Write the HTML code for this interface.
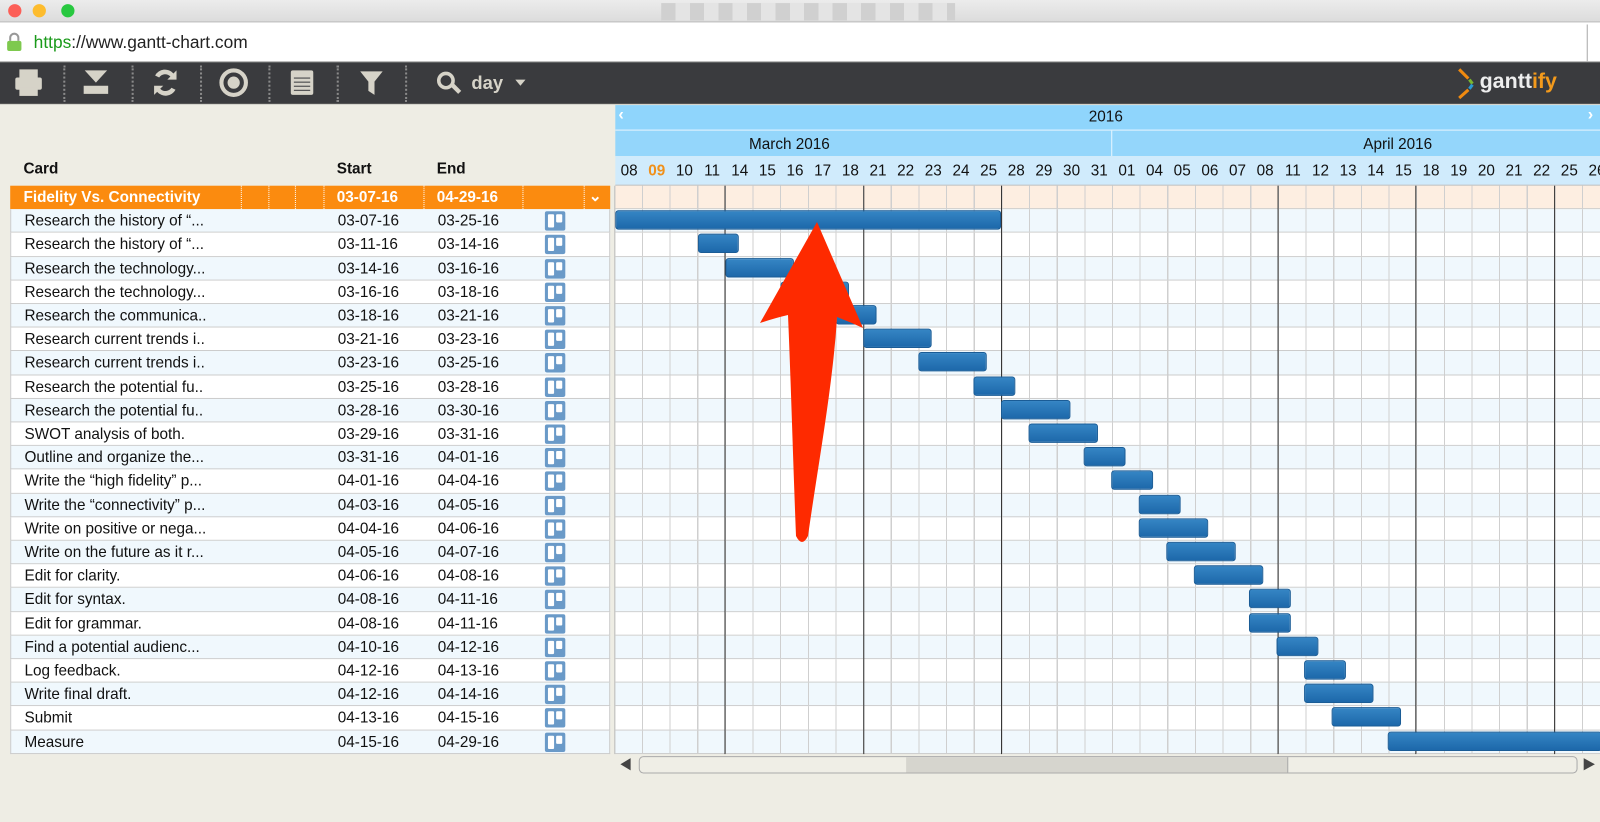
<!DOCTYPE html>
<html><head><meta charset="utf-8"><style>
*{box-sizing:border-box;margin:0;padding:0}
body{width:1600px;height:822px;overflow:hidden;background:#eeede4;font-family:"Liberation Sans",sans-serif;position:relative}
#w{position:absolute;left:0;top:0;width:1568px;height:806px;transform:scale(1.020408);transform-origin:0 0}
.a{position:absolute}
.title{left:0;top:0;width:1568px;height:22px;background:linear-gradient(#ececec,#dcdcdc);border-bottom:1px solid #b8b8b8}
.dot{top:4px;width:13px;height:13px;border-radius:50%}
.addr{left:0;top:22px;width:1568px;height:39px;background:#fff;border-bottom:1px solid #aaa}
.tb{left:0;top:61px;width:1568px;height:41px;background:#3a3b3e;border-bottom:1px solid #555}
.sep{top:64px;height:36px;border-left:2px dotted #8a8a8a}
.hdr{font-weight:bold;font-size:15px;color:#111;top:157px}
.row{left:10px;width:588px;height:23.2px;font-size:15px;color:#111;border-bottom:1px solid #ccc;border-left:1px solid #ccc;border-right:1px solid #ccc}
.row span{position:absolute;top:3px}
.ic{position:absolute;left:523px;top:2px;width:20px;height:19px;background:#6a9ac8;border-radius:2px}
.ic:before{content:"";position:absolute;left:3px;top:3px;width:6px;height:13px;background:#fff;border-radius:1px}
.ic:after{content:"";position:absolute;left:11px;top:3px;width:6px;height:8px;background:#fff;border-radius:1px}
.bar{position:absolute;height:19px;border-radius:3px;background:linear-gradient(#3585c4,#1d68aa);border:1px solid #1a5c96}
.gr{left:603px;width:965px;height:23.2px;border-bottom:1px solid #ccc;background-image:repeating-linear-gradient(90deg,transparent 0,transparent 26px,#cfcfcf 26px,#cfcfcf 27.1px)}
.vl{top:182px;width:1px;height:557px;background:#333}
.d{position:absolute;top:159px;font-size:15px;color:#111;width:27.1px;text-align:center}
</style></head><body>
<div id="w">
<div class="a title"></div>
<div class="a dot" style="left:8px;background:#fc5f57"></div>
<div class="a dot" style="left:32px;background:#fdbc2e"></div>
<div class="a dot" style="left:60px;background:#28c840"></div>
<div class="a" style="left:648px;top:3px;width:288px;height:17px;background:repeating-linear-gradient(90deg,#d0d0d0 0,#d0d0d0 14px,#e4e4e4 14px,#e4e4e4 28px)"></div>
<div class="a addr"></div>
<svg class="a" style="left:6px;top:31px" width="16" height="20"><path d="M4 9V6a4 4 0 0 1 8 0v3" fill="none" stroke="#999" stroke-width="2"/><rect x="1" y="9" width="14" height="10" rx="2" fill="#7ec94e"/></svg>
<div class="a" style="left:33px;top:32px;font-size:17px;color:#222"><span style="color:#1a9a1a">https</span>://www.gantt-chart.com</div>
<div class="a" style="left:1555px;top:24px;width:1px;height:36px;background:#aaa"></div>
<div class="a tb"></div>
<div class="a sep" style="left:62px"></div><div class="a sep" style="left:129px"></div><div class="a sep" style="left:196px"></div><div class="a sep" style="left:263px"></div><div class="a sep" style="left:330px"></div><div class="a sep" style="left:397px"></div>
<svg class="a" style="left:0;top:62px" width="530" height="40" fill="#d6d3c8">
<rect x="19" y="6" width="18" height="8" /><rect x="15" y="14" width="26" height="12" rx="2"/><rect x="19" y="24" width="18" height="8"/>
<path d="M83 7h22l-11 12zM82 22h24v8H82z"/>
<path d="M152 12a11 11 0 0 1 18-2l3-3v9h-9l3-3a7 7 0 0 0-11 1zM172 26a11 11 0 0 1-18 2l-3 3v-9h9l-3 3a7 7 0 0 0 11-1z"/>
<circle cx="229" cy="19" r="12" fill="none" stroke="#d6d3c8" stroke-width="4"/><circle cx="229" cy="19" r="6"/>
<rect x="285" y="7" width="22" height="24" rx="2"/><g fill="#3a3b3e"><rect x="288" y="14" width="16" height="1"/><rect x="288" y="18" width="16" height="1"/><rect x="288" y="22" width="16" height="1"/><rect x="288" y="26" width="16" height="1"/></g>
<path d="M353 8h22l-8 10v13l-6-4v-9z"/>
<circle cx="437" cy="17" r="7" fill="none" stroke="#d6d3c8" stroke-width="3.5"/><path d="M441 22l3-3 8 8-3 3z"/>
<path d="M505 16h10l-5 6z"/>
</svg>
<div class="a" style="left:462px;top:71px;font-size:18px;font-weight:bold;color:#d6d3c8">day</div>
<svg class="a" style="left:1427px;top:66px" width="20" height="32"><path d="M3 2l9 9" stroke="#f08a10" stroke-width="3"/><path d="M13 12l3 4" stroke="#7ab630" stroke-width="3"/><path d="M16 17l-3 4" stroke="#2a9ad0" stroke-width="3"/><path d="M12 22l-9 8" stroke="#f08a10" stroke-width="3"/></svg>
<div class="a" style="left:1450px;top:68px;font-size:21px;font-weight:bold;color:#eee">gantt<span style="color:#f39a1c">ify</span></div>

<div class="a hdr" style="left:23px">Card</div>
<div class="a hdr" style="left:330px">Start</div>
<div class="a hdr" style="left:428px">End</div>

<div class="a" style="left:10px;top:182px;width:588px;height:23.2px;background:#fb8b0f;color:#fff;font-weight:bold;font-size:15px">
<span class="a" style="left:13px;top:3px">Fidelity Vs. Connectivity</span><span class="a" style="left:320px;top:3px">03-07-16</span><span class="a" style="left:418px;top:3px">04-29-16</span><span class="a" style="left:567px;top:1px">⌄</span>
<div class="a" style="left:226px;top:0;height:23px;border-left:1px dotted #fff"></div><div class="a" style="left:253px;top:0;height:23px;border-left:1px dotted #fff"></div><div class="a" style="left:279px;top:0;height:23px;border-left:1px dotted #fff"></div><div class="a" style="left:307px;top:0;height:23px;border-left:1px dotted #fff"></div><div class="a" style="left:405px;top:0;height:23px;border-left:1px dotted #fff"></div><div class="a" style="left:502px;top:0;height:23px;border-left:1px dotted #fff"></div><div class="a" style="left:562px;top:0;height:23px;border-left:1px dotted #fff"></div>
</div>

<!-- chart header -->
<div class="a" style="left:603px;top:103px;width:965px;height:25px;background:#8fd5fc"></div>
<div class="a" style="left:603px;top:127px;width:965px;height:1px;background:#e8f6ff"></div>
<div class="a" style="left:603px;top:128px;width:965px;height:25px;background:#94d6fb"></div>
<div class="a" style="left:1089px;top:128px;width:1px;height:25px;background:#e8f6ff"></div>
<div class="a" style="left:603px;top:153px;width:965px;height:29px;background:#d0ebfc;border-bottom:1px solid #bbb"></div>
<div class="a" style="left:606px;top:104px;font-size:16px;font-weight:bold;color:#fff">‹</div>
<div class="a" style="left:1556px;top:104px;font-size:16px;font-weight:bold;color:#fff">›</div>
<div class="a" style="left:1067px;top:106px;font-size:15px;color:#111">2016</div>
<div class="a" style="left:734px;top:133px;font-size:15px;color:#111">March 2016</div>
<div class="a" style="left:1336px;top:133px;font-size:15px;color:#111">April 2016</div>
<div class="a" style="left:603px;top:0;width:965px;height:200px;overflow:hidden">
<div class="d" style="left:0">08</div><div class="d" style="left:27.1px;color:#f0901a;font-weight:bold">09</div><div class="d" style="left:54.2px">10</div><div class="d" style="left:81.3px">11</div><div class="d" style="left:108.4px">14</div><div class="d" style="left:135.5px">15</div><div class="d" style="left:162.6px">16</div><div class="d" style="left:189.7px">17</div><div class="d" style="left:216.8px">18</div><div class="d" style="left:243.9px">21</div><div class="d" style="left:271px">22</div><div class="d" style="left:298.1px">23</div><div class="d" style="left:325.2px">24</div><div class="d" style="left:352.3px">25</div><div class="d" style="left:379.4px">28</div><div class="d" style="left:406.5px">29</div><div class="d" style="left:433.6px">30</div><div class="d" style="left:460.7px">31</div><div class="d" style="left:487.8px">01</div><div class="d" style="left:514.9px">04</div><div class="d" style="left:542px">05</div><div class="d" style="left:569.1px">06</div><div class="d" style="left:596.2px">07</div><div class="d" style="left:623.3px">08</div><div class="d" style="left:650.4px">11</div><div class="d" style="left:677.5px">12</div><div class="d" style="left:704.6px">13</div><div class="d" style="left:731.7px">14</div><div class="d" style="left:758.8px">15</div><div class="d" style="left:785.9px">18</div><div class="d" style="left:813px">19</div><div class="d" style="left:840.1px">20</div><div class="d" style="left:867.2px">21</div><div class="d" style="left:894.3px">22</div><div class="d" style="left:921.4px">25</div><div class="d" style="left:948.5px">26</div>
</div>

<div class="a gr" style="top:182px;background-color:#fdeee1"></div>
<div class="a gr" style="top:205.2px;background-color:#f0f8fd"></div><div class="a gr" style="top:228.4px;background-color:#fff"></div><div class="a gr" style="top:251.6px;background-color:#f0f8fd"></div><div class="a gr" style="top:274.8px;background-color:#fff"></div><div class="a gr" style="top:298px;background-color:#f0f8fd"></div><div class="a gr" style="top:321.2px;background-color:#fff"></div><div class="a gr" style="top:344.4px;background-color:#f0f8fd"></div><div class="a gr" style="top:367.6px;background-color:#fff"></div><div class="a gr" style="top:390.8px;background-color:#f0f8fd"></div><div class="a gr" style="top:414px;background-color:#fff"></div><div class="a gr" style="top:437.2px;background-color:#f0f8fd"></div><div class="a gr" style="top:460.4px;background-color:#fff"></div><div class="a gr" style="top:483.6px;background-color:#f0f8fd"></div><div class="a gr" style="top:506.8px;background-color:#fff"></div><div class="a gr" style="top:530px;background-color:#f0f8fd"></div><div class="a gr" style="top:553.2px;background-color:#fff"></div><div class="a gr" style="top:576.4px;background-color:#f0f8fd"></div><div class="a gr" style="top:599.6px;background-color:#fff"></div><div class="a gr" style="top:622.8px;background-color:#f0f8fd"></div><div class="a gr" style="top:646px;background-color:#fff"></div><div class="a gr" style="top:669.2px;background-color:#f0f8fd"></div><div class="a gr" style="top:692.4px;background-color:#fff"></div><div class="a gr" style="top:715.6px;background-color:#f0f8fd"></div>
<div class="a" style="left:602px;top:182px;width:1px;height:557px;background:#bbb"></div>
<div class="a vl" style="left:710px"></div><div class="a vl" style="left:846px"></div><div class="a vl" style="left:981px"></div><div class="a vl" style="left:1252px"></div><div class="a vl" style="left:1387px"></div><div class="a vl" style="left:1523px"></div>

<div class="bar" style="left:603px;top:206px;width:378px"></div>
<div class="bar" style="left:684px;top:229.4px;width:40px"></div>
<div class="bar" style="left:711px;top:252.6px;width:67px"></div>
<div class="bar" style="left:765px;top:275.8px;width:67px"></div>
<div class="bar" style="left:819px;top:299px;width:40px"></div>
<div class="bar" style="left:846px;top:322.2px;width:67px"></div>
<div class="bar" style="left:900px;top:345.4px;width:67px"></div>
<div class="bar" style="left:954px;top:368.6px;width:41px"></div>
<div class="bar" style="left:981px;top:391.8px;width:68px"></div>
<div class="bar" style="left:1008px;top:415px;width:68px"></div>
<div class="bar" style="left:1062px;top:438.2px;width:41px"></div>
<div class="bar" style="left:1089px;top:461.4px;width:41px"></div>
<div class="bar" style="left:1116px;top:484.6px;width:41px"></div>
<div class="bar" style="left:1116px;top:507.8px;width:68px"></div>
<div class="bar" style="left:1143px;top:531px;width:68px"></div>
<div class="bar" style="left:1170px;top:554.2px;width:68px"></div>
<div class="bar" style="left:1224px;top:577.4px;width:41px"></div>
<div class="bar" style="left:1224px;top:600.6px;width:41px"></div>
<div class="bar" style="left:1251px;top:623.8px;width:41px"></div>
<div class="bar" style="left:1278px;top:647px;width:41px"></div>
<div class="bar" style="left:1278px;top:670.2px;width:68px"></div>
<div class="bar" style="left:1305px;top:693.4px;width:68px"></div>
<div class="bar" style="left:1360px;top:716.6px;width:210px"></div>

<div class="a row" style="top:205.2px;background:#f0f8fd"><span style="left:13px">Research the history of “...</span><span style="left:320px">03-07-16</span><span style="left:418px">03-25-16</span><i class="ic"></i></div>
<div class="a row" style="top:228.4px;background:#fff"><span style="left:13px">Research the history of “...</span><span style="left:320px">03-11-16</span><span style="left:418px">03-14-16</span><i class="ic"></i></div>
<div class="a row" style="top:251.6px;background:#f0f8fd"><span style="left:13px">Research the technology...</span><span style="left:320px">03-14-16</span><span style="left:418px">03-16-16</span><i class="ic"></i></div>
<div class="a row" style="top:274.8px;background:#fff"><span style="left:13px">Research the technology...</span><span style="left:320px">03-16-16</span><span style="left:418px">03-18-16</span><i class="ic"></i></div>
<div class="a row" style="top:298px;background:#f0f8fd"><span style="left:13px">Research the communica..</span><span style="left:320px">03-18-16</span><span style="left:418px">03-21-16</span><i class="ic"></i></div>
<div class="a row" style="top:321.2px;background:#fff"><span style="left:13px">Research current trends i..</span><span style="left:320px">03-21-16</span><span style="left:418px">03-23-16</span><i class="ic"></i></div>
<div class="a row" style="top:344.4px;background:#f0f8fd"><span style="left:13px">Research current trends i..</span><span style="left:320px">03-23-16</span><span style="left:418px">03-25-16</span><i class="ic"></i></div>
<div class="a row" style="top:367.6px;background:#fff"><span style="left:13px">Research the potential fu..</span><span style="left:320px">03-25-16</span><span style="left:418px">03-28-16</span><i class="ic"></i></div>
<div class="a row" style="top:390.8px;background:#f0f8fd"><span style="left:13px">Research the potential fu..</span><span style="left:320px">03-28-16</span><span style="left:418px">03-30-16</span><i class="ic"></i></div>
<div class="a row" style="top:414px;background:#fff"><span style="left:13px">SWOT analysis of both.</span><span style="left:320px">03-29-16</span><span style="left:418px">03-31-16</span><i class="ic"></i></div>
<div class="a row" style="top:437.2px;background:#f0f8fd"><span style="left:13px">Outline and organize the...</span><span style="left:320px">03-31-16</span><span style="left:418px">04-01-16</span><i class="ic"></i></div>
<div class="a row" style="top:460.4px;background:#fff"><span style="left:13px">Write the “high fidelity” p...</span><span style="left:320px">04-01-16</span><span style="left:418px">04-04-16</span><i class="ic"></i></div>
<div class="a row" style="top:483.6px;background:#f0f8fd"><span style="left:13px">Write the “connectivity” p...</span><span style="left:320px">04-03-16</span><span style="left:418px">04-05-16</span><i class="ic"></i></div>
<div class="a row" style="top:506.8px;background:#fff"><span style="left:13px">Write on positive or nega...</span><span style="left:320px">04-04-16</span><span style="left:418px">04-06-16</span><i class="ic"></i></div>
<div class="a row" style="top:530px;background:#f0f8fd"><span style="left:13px">Write on the future as it r...</span><span style="left:320px">04-05-16</span><span style="left:418px">04-07-16</span><i class="ic"></i></div>
<div class="a row" style="top:553.2px;background:#fff"><span style="left:13px">Edit for clarity.</span><span style="left:320px">04-06-16</span><span style="left:418px">04-08-16</span><i class="ic"></i></div>
<div class="a row" style="top:576.4px;background:#f0f8fd"><span style="left:13px">Edit for syntax.</span><span style="left:320px">04-08-16</span><span style="left:418px">04-11-16</span><i class="ic"></i></div>
<div class="a row" style="top:599.6px;background:#fff"><span style="left:13px">Edit for grammar.</span><span style="left:320px">04-08-16</span><span style="left:418px">04-11-16</span><i class="ic"></i></div>
<div class="a row" style="top:622.8px;background:#f0f8fd"><span style="left:13px">Find a potential audienc...</span><span style="left:320px">04-10-16</span><span style="left:418px">04-12-16</span><i class="ic"></i></div>
<div class="a row" style="top:646px;background:#fff"><span style="left:13px">Log feedback.</span><span style="left:320px">04-12-16</span><span style="left:418px">04-13-16</span><i class="ic"></i></div>
<div class="a row" style="top:669.2px;background:#f0f8fd"><span style="left:13px">Write final draft.</span><span style="left:320px">04-12-16</span><span style="left:418px">04-14-16</span><i class="ic"></i></div>
<div class="a row" style="top:692.4px;background:#fff"><span style="left:13px">Submit</span><span style="left:320px">04-13-16</span><span style="left:418px">04-15-16</span><i class="ic"></i></div>
<div class="a row" style="top:715.6px;background:#f0f8fd"><span style="left:13px">Measure</span><span style="left:320px">04-15-16</span><span style="left:418px">04-29-16</span><i class="ic"></i></div>

<svg class="a" style="left:600px;top:740px" width="968" height="22">
<path d="M8 9l10-6v12z" fill="#444"/>
<rect x="26.5" y="1.5" width="919" height="16" rx="4" fill="#efeee6" stroke="#aaa"/>
<rect x="288" y="2" width="374" height="15" fill="#d6d5ce"/><line x1="662" y1="2" x2="662" y2="17" stroke="#aaa"/>
<path d="M952 3l11 6-11 6z" fill="#444"/>
</svg>
</div>
<svg class="a" style="left:0;top:0" width="1600" height="822">
<path d="M817 222L863 328Q850 322 837 317C833 385 818 465 808 536Q802 548 796 536C793 460 791 385 788 315Q775 318 760 323Z" fill="#fe2a00"/>
</svg>
</body></html>
